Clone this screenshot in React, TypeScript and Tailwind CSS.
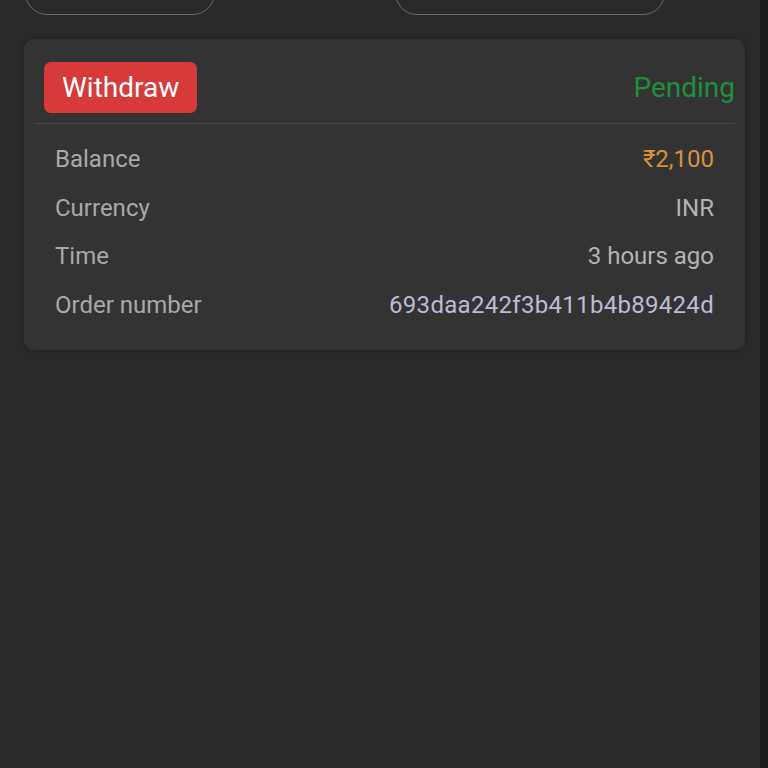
const rows = [
  { label: "Balance", value: "₹2,100", color: "text-[#d9913a]" },
  { label: "Currency", value: "INR", color: "text-[#b3b3b3]" },
  { label: "Time", value: "3 hours ago", color: "text-[#b3b3b3]" },
  { label: "Order number", value: "693daa242f3b411b4b89424d", color: "text-[#bcbcd6] tracking-[0.3px]" },
];

const App = () => {
  return (
    <div
      className="flex w-[768px] h-[768px] bg-[#2a2a2a] overflow-hidden"
      style={{ fontFamily: "Roboto, 'Noto Sans', sans-serif" }}
    >
      <div className="flex flex-col w-[760px]">
        <div className="flex items-end h-[15px] overflow-hidden pl-[25px] gap-[180px]">
          <div className="w-[190px] h-[46px] shrink-0 rounded-[22px] border-[1.5px] border-[#6b6b6b]" />
          <div className="w-[270px] h-[46px] shrink-0 rounded-[22px] border-[1.5px] border-[#6b6b6b]" />
        </div>

        <div className="mt-[24px] ml-[24px] w-[721px] h-[311px] rounded-[10px] bg-[#333333] shadow-[0_0_4px_rgba(0,0,0,0.25)]">
          <div className="flex items-center justify-between pl-[20px] pr-[10px] pt-[23px] pb-[10px]">
            <div className="h-[51px] px-[18px] flex items-center rounded-[7px] bg-[#d63a3a] text-white text-[28px]">
              Withdraw
            </div>
            <div className="text-[#1f8f3e] text-[28px]">Pending</div>
          </div>
          <div className="mx-[10px] h-px bg-[#454545]" />
          <div className="flex flex-col px-[31px] pt-[11px]">
            {rows.map((row) => (
              <div key={row.label} className="flex items-center justify-between h-[48.5px] text-[24px]">
                <span className="text-[#a9a9a9]">{row.label}</span>
                <span className={row.color}>{row.value}</span>
              </div>
            ))}
          </div>
        </div>
      </div>
      <div className="flex-1 bg-[#1d1d1d]" />
    </div>
  );
};

export default App;
